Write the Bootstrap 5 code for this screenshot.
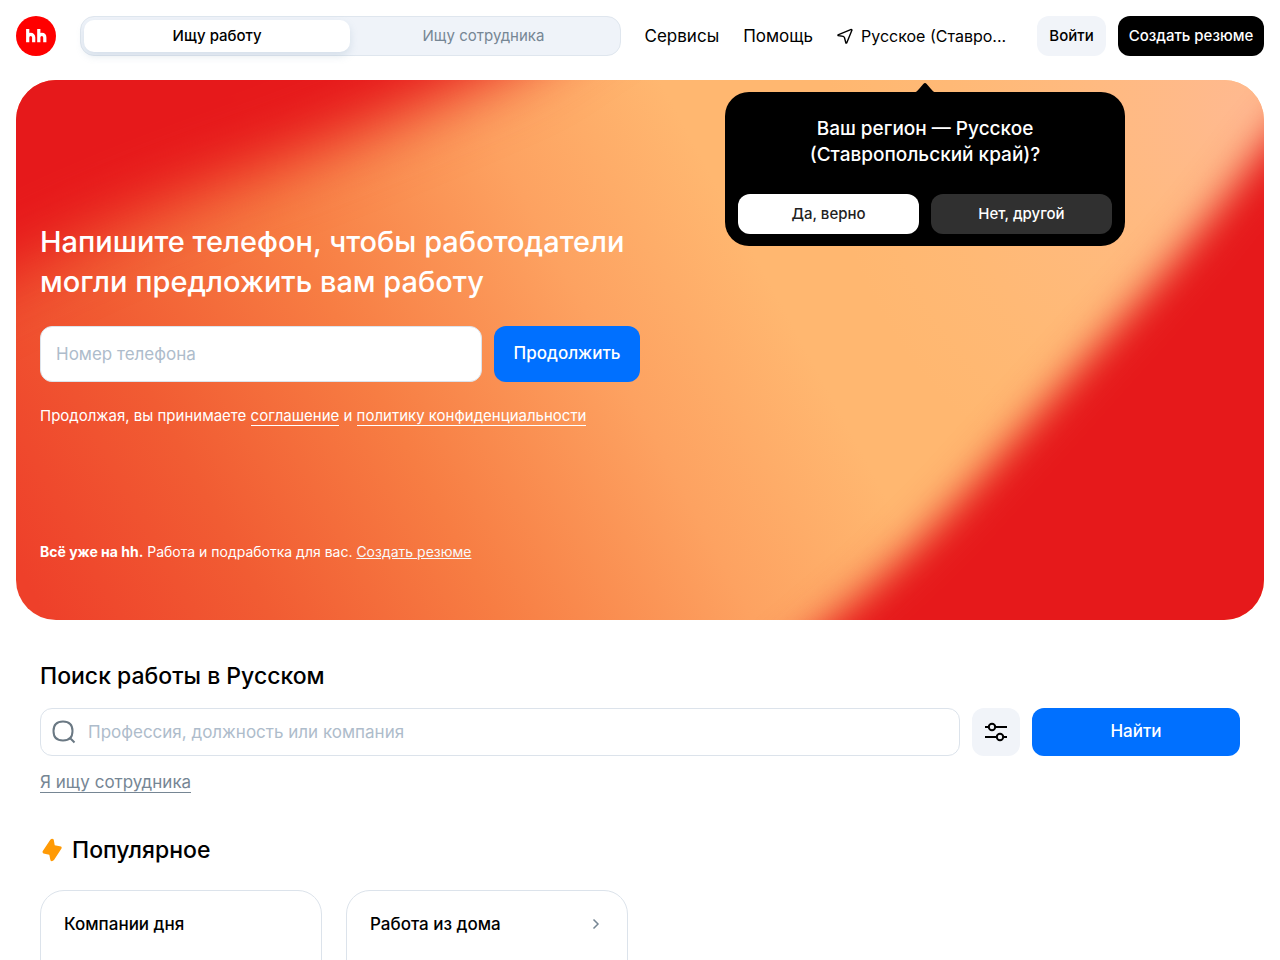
<!DOCTYPE html>
<html lang="ru">
<head>
<meta charset="utf-8">
<meta name="viewport" content="width=device-width, initial-scale=1">
<title>Поиск работы в Русском</title>
<link href="https://cdn.jsdelivr.net/npm/bootstrap@5.3.0/dist/css/bootstrap.min.css" rel="stylesheet">
<style>
  body { font-family: Inter, "Noto Sans", sans-serif; font-size: 17px; line-height: 24px; color: #000; background: #fff; }
  .text-compact { font-size: 15px; line-height: 20px; }
  .text-footnote { font-size: 14px; line-height: 20px; }
  .section-title { font-size: 23px; line-height: 32px; font-weight: 500; }
  .btn { border: 0; border-radius: 12px; font-weight: 500; }
  .btn-compact { height: 40px; padding: 0 10px; font-size: 15px; line-height: 20px; white-space: nowrap; }
  .btn-brand, .btn-brand:hover { background: #0070ff; color: #fff; }
  .btn-ink, .btn-ink:hover { background: #000; color: #fff; min-width: 146px; }
  .btn-soft, .btn-soft:hover { background: #f1f4f9; color: #000; }
  .btn-login { min-width: 69px; }
  .btn-dim, .btn-dim:hover { background: #303030; color: #fff; }
  .btn-plain, .btn-plain:hover { background: #fff; color: #222; }
  .gap-12 { gap: 12px; }

  .role-switch { height: 40px; padding: 3px; border: 1px solid #dfe6ee; border-radius: 14px; background: #eff3f9; }
  .role-switch button { border: 0; border-radius: 10px; background: none; color: #768694; }
  .role-switch .chosen { background: #fff; color: #000; font-weight: 500; box-shadow: 0 4px 8px rgba(112, 146, 177, .2); }
  .site-link { color: #000; text-decoration: none; }
  .region-link { width: 176px; font-size: 16px; white-space: nowrap; }

  .region-tip { position: absolute; top: 68px; left: 50%; z-index: 2; width: 400px; height: 154px; margin-left: -200px; padding: 12px 13px; border-radius: 24px; background: #000; }
  .region-tip .tip-notch { position: absolute; top: -10px; left: 50%; margin-left: -14px; }
  .region-tip p { padding: 12px 48px 0; font-size: 19px; line-height: 26px; font-weight: 500; }

  .hero { border-radius: 40px; height: 540px; color: #fff; }
  .hero-art { position: absolute; inset: 0; width: 100%; height: 100%; }
  .hero-body { padding: 142px 24px 58px; height: 100%; }
  .hero-title { font-size: 29px; line-height: 40px; font-weight: 500; }
  .phone-field, .phone-field:focus { height: 56px; padding: 0 15px; border: 1px solid #dce3eb; border-radius: 12px; font-size: 17px; background: #fff; }
  .form-control::placeholder { color: #aebccb; }
  .btn-tall { width: 146px; height: 56px; padding: 0; font-size: 17px; }
  .ruled { color: inherit; text-decoration: none; border-bottom: 1px solid currentColor; }

  .search-box { height: 48px; padding: 0 11px; border: 1px solid #dce3eb; border-radius: 12px; }
  .search-box .form-control { font-size: 17px; line-height: 24px; }
  .btn-filter { width: 48px; height: 48px; }
  .btn-find { width: 208px; height: 48px; font-size: 17px; }
  .text-muted-blue { color: #768694; }
  .switch-role { margin-top: 14px; }
  .topic { height: 220px; padding: 21px 23px; border: 1px solid #dce3eb; border-radius: 24px; font-weight: 500; color: #000; text-decoration: none; }
</style>
</head>
<body>
<header class="d-flex align-items-center p-3 gap-4">
  <a href="#" class="d-block flex-shrink-0" aria-label="hh">
    <svg class="d-block" width="40" height="40" viewBox="0 0 40 40" aria-hidden="true">
      <circle cx="20" cy="20" r="20" fill="#f00"/>
      <g fill="none" stroke="#fff" stroke-width="3.2">
        <path d="M11.700 13V26.200M11.700 21.500C11.700 17.200 17.700 17.200 17.700 21.500V26.200"/>
        <path d="M22.800 13V26.200M22.800 21.500C22.800 17.200 28.800 17.200 28.800 21.500V26.200"/>
      </g>
    </svg>
  </a>
  <div class="role-switch d-flex flex-fill text-compact" role="group">
    <button type="button" class="chosen col-6 p-0">Ищу работу</button>
    <button type="button" class="col-6 p-0">Ищу сотрудника</button>
  </div>
  <a href="#" class="site-link">Сервисы</a>
  <a href="#" class="site-link">Помощь</a>
  <div class="position-relative flex-shrink-0">
    <a href="#" class="site-link region-link d-flex align-items-center gap-2">
      <svg class="flex-shrink-0" width="16" height="16" viewBox="0 0 16 16" fill="none" stroke="#000" stroke-width="1.400" stroke-linejoin="round" aria-hidden="true"><path d="M1 6.900 14.300 1.400 15 2.100 9.700 15 8.900 15 7.500 9.700Q7.200 8.700 6.200 8.400L1 7.500Z"/></svg>
      <span>Русское (Ставро...</span>
    </a>
    <div class="region-tip d-flex flex-column text-center text-white" role="dialog">
      <svg class="tip-notch" width="28" height="11" viewBox="0 0 28 11" aria-hidden="true"><path d="M0 11C5 11 6 9 8 7L12.300 2Q14 .2 15.700 2L20 7C22 9 23 11 28 11Z"/></svg>
      <p class="mb-0">Ваш регион — Русское (Ставропольский край)?</p>
      <div class="d-flex gap-12 mt-auto">
        <button type="button" class="btn btn-compact btn-plain flex-fill w-50">Да, верно</button>
        <button type="button" class="btn btn-compact btn-dim flex-fill w-50">Нет, другой</button>
      </div>
    </div>
  </div>
  <div class="d-flex gap-12 flex-shrink-0">
    <button type="button" class="btn btn-compact btn-soft btn-login">Войти</button>
    <button type="button" class="btn btn-compact btn-ink">Создать резюме</button>
  </div>
</header>

<main>
  <section class="hero position-relative overflow-hidden mx-3 mt-2">
    <svg class="hero-art" viewBox="0 0 1248 540" preserveAspectRatio="none" aria-hidden="true">
      <defs>
        <linearGradient id="warm" gradientUnits="userSpaceOnUse" x1="20" y1="520" x2="720" y2="140">
          <stop offset="0" stop-color="#ee402a"/><stop offset=".25" stop-color="#f15c33"/><stop offset=".5" stop-color="#f77d43"/><stop offset=".78" stop-color="#fda261"/><stop offset="1" stop-color="#ffb770"/>
        </linearGradient>
        <radialGradient id="pink" gradientUnits="userSpaceOnUse" cx="1230" cy="30" r="420">
          <stop offset="0" stop-color="#ffb990"/><stop offset="1" stop-color="#ffc080" stop-opacity="0"/>
        </radialGradient>
        <filter id="soft" x="-50%" y="-50%" width="200%" height="200%" color-interpolation-filters="sRGB"><feGaussianBlur stdDeviation="32"/></filter>
        <filter id="edge" x="-50%" y="-50%" width="200%" height="200%" color-interpolation-filters="sRGB"><feGaussianBlur stdDeviation="19"/></filter>
      </defs>
      <rect width="1248" height="540" fill="url(#warm)"/>
      <rect width="1248" height="540" fill="url(#pink)"/>
      <path d="M-150-150H700L510-20Q370 44 260 84Q90 142-10 196L-150 266Z" fill="#e6191b" filter="url(#soft)"/>
      <path d="M1400-120 1248 66Q1190 145 1130 212L970 390Q900 470 820 536L720 620V700H1400Z" fill="#e6191b" filter="url(#edge)"/>
    </svg>
    <div class="hero-body position-relative d-flex flex-column">
      <div class="row g-0">
        <div class="col-6">
          <h1 class="hero-title mb-0">Напишите телефон, чтобы работодатели могли предложить вам работу</h1>
          <form class="d-flex gap-12 mt-4">
            <input type="tel" class="form-control phone-field" placeholder="Номер телефона" aria-label="Номер телефона">
            <button type="button" class="btn btn-brand btn-tall flex-shrink-0">Продолжить</button>
          </form>
          <p class="text-compact mb-0 mt-4">Продолжая, вы принимаете <a href="#" class="ruled">соглашение</a> и <a href="#" class="ruled">политику конфиденциальности</a></p>
        </div>
      </div>
      <p class="text-footnote mb-0 mt-auto"><b>Всё уже на hh.</b> Работа и подработка для вас. <a href="#" class="link-light">Создать резюме</a></p>
    </div>
  </section>

  <section class="px-4 mx-3 mt-4 pt-3">
    <h2 class="section-title mb-3">Поиск работы в Русском</h2>
    <form class="d-flex gap-12">
      <label class="search-box d-flex align-items-center flex-fill gap-12">
        <svg class="flex-shrink-0" width="24" height="24" viewBox="0 0 24 24" fill="none" stroke="#6a7883" stroke-width="2" aria-hidden="true"><path d="M11 1.500C17.500 1.500 20.500 4.500 20.500 11S17.500 20.500 11 20.500 1.500 17.500 1.500 11 4.500 1.500 11 1.500ZM17.500 17.500l5 5"/></svg>
        <input type="search" class="form-control border-0 shadow-none p-0" placeholder="Профессия, должность или компания" aria-label="Профессия, должность или компания">
      </label>
      <button type="button" class="btn btn-soft btn-filter p-0 flex-shrink-0" aria-label="Фильтры">
        <svg class="d-block mx-auto" width="24" height="24" viewBox="0 0 24 24" fill="none" stroke="#000" stroke-width="2" aria-hidden="true"><path d="M1 7h3.500M11.500 7H23M1 17h11.500M19.500 17H23"/><circle cx="8" cy="7" r="3.200"/><circle cx="16" cy="17" r="3.200"/></svg>
      </button>
      <button type="button" class="btn btn-brand btn-find p-0 flex-shrink-0">Найти</button>
    </form>
    <div class="switch-role"><a href="#" class="ruled text-muted-blue">Я ищу сотрудника</a></div>
  </section>

  <section class="px-4 mx-3 mt-4 pt-3">
    <h2 class="section-title d-flex align-items-center gap-2 mb-4">
      <svg width="24" height="24" viewBox="0 0 24 24" aria-hidden="true"><path d="M10.300 1.800Q12-.2 13.700 1.500L14.700 7.200 21 8.400Q22 9 21.500 10.500L14 22Q12 24 10.500 22.500L9.300 16.800 3.500 15.500Q2 14.600 2.800 13Z" fill="#ff9a05"/></svg>
      Популярное
    </h2>
    <div class="row row-cols-4 gx-4">
      <div class="col"><a href="#" class="topic d-block">Компании дня</a></div>
      <div class="col"><a href="#" class="topic d-flex justify-content-between">Работа из дома
        <svg width="16" height="24" viewBox="0 0 16 24" fill="none" stroke="#768694" stroke-width="1.500" aria-hidden="true"><path d="M5.500 7.500 10 12 5.500 16.500"/></svg></a></div>
    </div>
  </section>
</main>
<script src="https://cdn.jsdelivr.net/npm/bootstrap@5.3.0/dist/js/bootstrap.bundle.min.js"></script>
</body>
</html>
